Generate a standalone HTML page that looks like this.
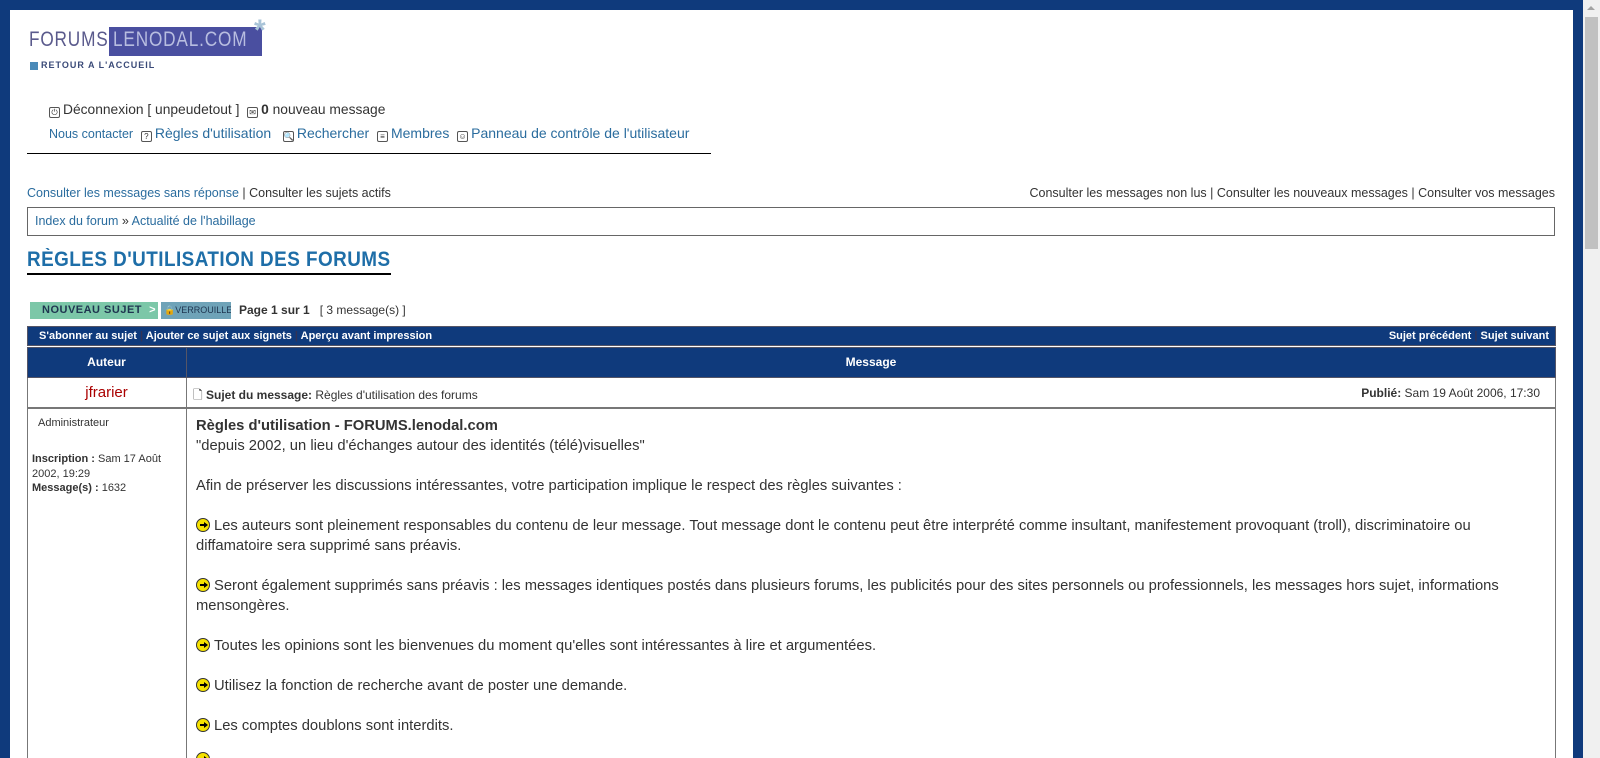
<!DOCTYPE html>
<html><head><meta charset="utf-8"><style>
*{margin:0;padding:0;box-sizing:border-box}
html,body{width:1600px;height:758px;overflow:hidden;background:#0f3a7c;font-family:"Liberation Sans",Arial,sans-serif;color:#333;position:relative}
#page{position:absolute;left:10px;top:10px;width:1563px;height:748px;background:#fff;overflow:hidden}
#sb{position:absolute;left:1583px;top:0;width:17px;height:758px;background:#f0f0f0}
#sb .th{position:absolute;left:2px;top:17px;width:13px;height:232px;background:#c1c1c1}
#sb .ar{position:absolute;left:4px;top:6px;width:0;height:0;border-left:4px solid transparent;border-right:4px solid transparent;border-bottom:4px solid #a3a3a3}
.a{position:absolute;white-space:nowrap}
a{color:#2a6c9e;text-decoration:none}
.ic{display:inline-block;width:11px;height:11px;border:1px solid #555;border-radius:2px;margin-right:3px;vertical-align:-1px;font-size:8px;line-height:9px;text-align:center;color:#333}
.arr{display:inline-block;width:14px;height:14px;border-radius:50%;background:#f5e100;border:1px solid #333;vertical-align:-2px;margin-right:4px;position:relative}
.arr:after{content:"";position:absolute;left:3px;top:5px;width:5px;height:2px;background:#000}
.arr:before{content:"";position:absolute;left:7px;top:3px;border-left:4px solid #000;border-top:3px solid transparent;border-bottom:3px solid transparent}
.p{position:absolute;left:186px;font-size:14.75px;color:#333;line-height:20px;white-space:nowrap}
</style></head><body>
<div id="page">
<div class="a" style="left:19px;top:18px;font-size:21px;letter-spacing:1px;color:#5a5a8c;line-height:24px;transform:scaleX(0.82);transform-origin:left">FORUMS.</div>
<div class="a" style="left:99px;top:17px;width:153px;height:29px;background:#4a4fa0"></div>
<div class="a" style="left:103px;top:18px;font-size:21px;letter-spacing:1px;color:#b8bde0;line-height:24px;transform:scaleX(0.82);transform-origin:left">LENODAL.COM</div>
<div class="a" style="left:244px;top:6px;font-size:30px;color:#a9c4d8;font-weight:bold;line-height:30px">*</div>
<div class="a" style="left:20px;top:52px;width:8px;height:8px;background:#4a8ab8"></div>
<div class="a" style="left:31px;top:50px;font-size:9px;letter-spacing:1px;color:#3a4a78;font-weight:bold">RETOUR A L'ACCUEIL</div>

<div class="a" style="left:39px;top:92px;font-size:13.8px;color:#333"><span class="ic">⏻</span>Déconnexion [ unpeudetout ] &nbsp;<span class="ic">✉</span><b>0</b> nouveau message</div>
<div class="a" style="left:39px;top:115px;font-size:14px"><a style="font-size:12.5px">Nous contacter</a> &nbsp;<span class="ic">?</span><a>Règles d'utilisation</a> &nbsp; <span class="ic">🔍</span><a>Rechercher</a> &nbsp;<span class="ic">≡</span><a>Membres</a> &nbsp;<span class="ic">☺</span><a>Panneau de contrôle de l'utilisateur</a></div>
<div class="a" style="left:17px;top:143px;width:684px;height:1px;background:#000"></div>

<div class="a" style="left:17px;top:176px;font-size:12.5px;color:#333"><a>Consulter les messages sans réponse</a> | Consulter les sujets actifs</div>
<div class="a" style="right:18px;top:176px;font-size:12.5px;color:#333">Consulter les messages non lus | Consulter les nouveaux messages | Consulter vos messages</div>
<div class="a" style="left:17px;top:197px;width:1528px;height:29px;border:1px solid #666"></div>
<div class="a" style="left:25px;top:204px;font-size:12.5px;color:#333"><a>Index du forum</a> » <a>Actualité de l'habillage</a></div>

<div class="a" style="left:17px;top:238px;font-size:21px;font-weight:bold;color:#1e6ea8;transform:scaleX(0.9);transform-origin:left;letter-spacing:0.5px">RÈGLES D'UTILISATION DES FORUMS</div>
<div class="a" style="left:17px;top:263px;width:364px;height:2px;background:#000"></div>

<div class="a" style="left:20px;top:292px;width:128px;height:17px;background:#7cc7a8;font-size:11px;font-weight:bold;color:#1f3550;line-height:17px;padding-left:12px;letter-spacing:.5px">NOUVEAU SUJET &nbsp;<span style="color:#fff">&gt;</span></div>
<div class="a" style="left:151px;top:292px;width:70px;height:17px;background:#6fa3b8;font-size:9px;color:#1f3550;line-height:17px;padding-left:3px;overflow:hidden">🔒VERROUILLE</div>
<div class="a" style="left:229px;top:292px;font-size:12px;line-height:17px;color:#333"><b>Page 1 sur 1</b> &nbsp; [ 3 message(s) ]</div>

<div class="a" style="left:17px;top:316px;width:1529px;height:20px;background:#0f3a7c;border:1px solid #556"></div>
<div class="a" style="left:29px;top:318px;font-size:11px;color:#fff;font-weight:bold;line-height:16px">S'abonner au sujet <span style="color:#335">|</span> Ajouter ce sujet aux signets <span style="color:#335">|</span> Aperçu avant impression</div>
<div class="a" style="right:24px;top:318px;font-size:11px;color:#fff;font-weight:bold;line-height:16px">Sujet précédent <span style="color:#335">|</span> Sujet suivant</div>
<div class="a" style="left:17px;top:337px;width:1529px;height:31px;background:#0f3a7c;border:1px solid #556"></div>
<div class="a" style="left:176px;top:337px;width:1px;height:31px;background:#556"></div>
<div class="a" style="left:17px;top:337px;width:159px;font-size:12px;font-weight:bold;color:#fff;text-align:center;line-height:31px">Auteur</div>
<div class="a" style="left:177px;top:337px;width:1368px;font-size:12px;font-weight:bold;color:#fff;text-align:center;line-height:31px">Message</div>

<div class="a" style="left:17px;top:368px;width:1529px;height:30px;border:1px solid #777;border-top:none"></div>
<div class="a" style="left:176px;top:368px;width:1px;height:380px;background:#777"></div>
<div class="a" style="left:17px;top:398px;width:1529px;height:1px;background:#777"></div>
<div class="a" style="left:17px;top:398px;width:1px;height:350px;background:#777"></div>
<div class="a" style="left:1545px;top:398px;width:1px;height:350px;background:#777"></div>
<div class="a" style="left:17px;top:370px;width:159px;text-align:center;font-size:15px;color:#a00;line-height:26px">jfrarier</div>
<div class="a" style="left:183px;top:376px;font-size:12px;color:#333">🗋 <b>Sujet du message:</b> Règles d'utilisation des forums</div>
<div class="a" style="right:33px;top:376px;font-size:12px;color:#333"><b>Publié:</b> Sam 19 Août 2006, 17:30</div>

<div class="a" style="left:28px;top:407px;font-size:11px;color:#333">Administrateur</div>
<div class="a" style="left:22px;top:442px;font-size:11px;color:#333;line-height:14.5px;white-space:normal;width:140px"><b>Inscription :</b> Sam 17 Août 2002, 19:29<br><b>Message(s) :</b> 1632</div>

<div class="p" style="top:406px"><b>Règles d'utilisation - FORUMS.lenodal.com</b></div>
<div class="p" style="top:426px">"depuis 2002, un lieu d'échanges autour des identités (télé)visuelles"</div>
<div class="p" style="top:466px">Afin de préserver les discussions intéressantes, votre participation implique le respect des règles suivantes :</div>
<div class="p" style="top:506px"><span class="arr"></span>Les auteurs sont pleinement responsables du contenu de leur message. Tout message dont le contenu peut être interprété comme insultant, manifestement provoquant (troll), discriminatoire ou</div>
<div class="p" style="top:526px">diffamatoire sera supprimé sans préavis.</div>
<div class="p" style="top:566px"><span class="arr"></span>Seront également supprimés sans préavis : les messages identiques postés dans plusieurs forums, les publicités pour des sites personnels ou professionnels, les messages hors sujet, informations</div>
<div class="p" style="top:586px">mensongères.</div>
<div class="p" style="top:626px"><span class="arr"></span>Toutes les opinions sont les bienvenues du moment qu'elles sont intéressantes à lire et argumentées.</div>
<div class="p" style="top:666px"><span class="arr"></span>Utilisez la fonction de recherche avant de poster une demande.</div>
<div class="p" style="top:706px"><span class="arr"></span>Les comptes doublons sont interdits.</div>
<div class="p" style="top:740px"><span class="arr"></span></div>
</div>
<div id="sb"><div class="ar"></div><div class="th"></div></div>
</body></html>
